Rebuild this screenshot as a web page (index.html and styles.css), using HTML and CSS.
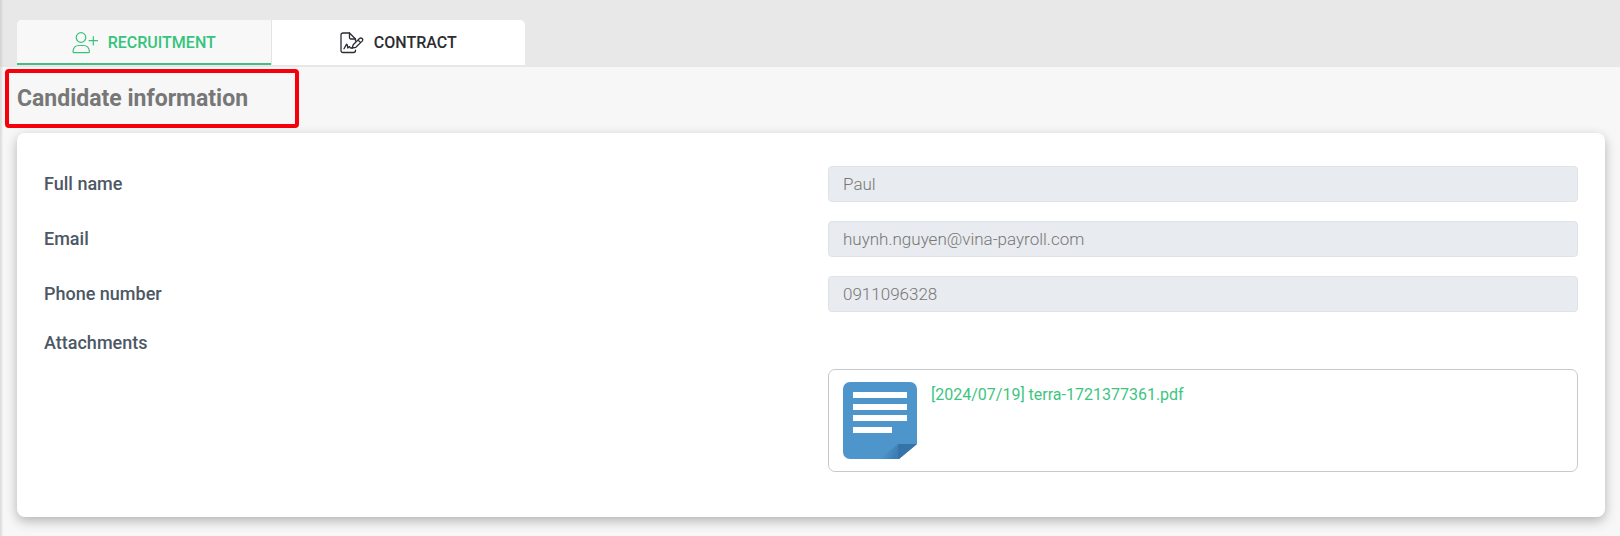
FILE: index.html
```
<!DOCTYPE html>
<html lang="en">
<head>
    <meta charset="UTF-8">
    <meta name="viewport" content="width=device-width, initial-scale=1.0">
    <title>Recruitment</title>
    <link rel="stylesheet" href="styles.css">
</head>
<body>

<header class="tab-bar">
    <nav class="tabs">
        <a href="#recruitment" class="tab active">
            <svg class="tab-icon" width="26" height="22" viewBox="0 0 26 22" fill="none" stroke="currentColor" stroke-width="1.2" stroke-linecap="round" stroke-linejoin="round">
                <circle cx="9" cy="5.5" r="4.8"/>
                <path d="M2.2 20.7h14c.8 0 1.3-.6 1.2-1.4-.4-3.6-3-5.8-6-5.8H7c-3 0-5.6 2.2-6 5.8-.1.8.4 1.4 1.2 1.4z"/>
                <path d="M21.3 4.5v8.4M17.1 8.7h8.4"/>
            </svg>
            RECRUITMENT
        </a>
        <a href="#contract" class="tab">
            <svg class="tab-icon" width="24" height="22" viewBox="0 0 24 22" fill="none" stroke="currentColor" stroke-width="1.3" stroke-linecap="round" stroke-linejoin="round">
                <path d="M15.5 18.2v.3c0 1.2-.8 2-2 2H3c-1.2 0-2-.8-2-2V3c0-1.2.8-2 2-2h6.5l6 6"/>
                <path d="M9.5 1v4.5c0 1 .5 1.5 1.5 1.5h4.5v2"/>
                <path d="M4 16.8l2.3-4.2c.3-.5.8-.4.9.2l.6 3.2L9 14.8c.4-.3.7-.1.9.3l.5.9h1.8"/>
                <path d="M12.2 16l1-3.2 6.3-6.3c1.7-1.5 4.3.8 2.7 2.6l-6.4 6.2zM18 8l2.6 2.6"/>
            </svg>
            CONTRACT
        </a>
    </nav>
</header>

<main>
    <h1 class="section-title">Candidate information</h1>

    <form class="card">
        <div class="form-row">
            <label for="full-name">Full name</label>
            <input type="text" id="full-name" value="Paul" readonly>
        </div>
        <div class="form-row">
            <label for="email">Email</label>
            <input type="text" id="email" value="huynh.nguyen@vina-payroll.com" readonly>
        </div>
        <div class="form-row">
            <label for="phone">Phone number</label>
            <input type="text" id="phone" value="0911096328" readonly>
        </div>
        <h2 class="attachments-title">Attachments</h2>
        <div class="form-row">
            <div class="attachment">
                <svg width="74" height="77" viewBox="0 0 74 77">
                    <defs>
                        <linearGradient id="fold-shade" x1="0" y1="0" x2="1" y2="0.4">
                            <stop offset="0.4" stop-color="#4e95cb"/>
                            <stop offset="1" stop-color="#3d7fb5"/>
                        </linearGradient>
                    </defs>
                    <path fill="#4e95cb" d="M7 0h60a7 7 0 0 1 7 7v55L56 77H7a7 7 0 0 1-7-7V7a7 7 0 0 1 7-7z"/>
                    <path fill="url(#fold-shade)" d="M55 62v15H36z"/>
                    <path fill="#3674a8" d="M55 62h19L56 77h-1z"/>
                    <path fill="#fff" d="M10 10h54v6H10zM10 22h54v6H10zM10 33h54v6H10zM10 45h39v6H10z"/>
                </svg>
                <a href="#terra-1721377361.pdf">[2024/07/19] terra-1721377361.pdf</a>
            </div>
        </div>
    </form>
</main>

</body>
</html>
```
FILE: styles.css
```
* {
    box-sizing: border-box;
}
body {
    font-family: Roboto, Arial, sans-serif;
    margin: 0;
    min-height: 100vh;
    background-color: #f7f7f7;
    color: #777;
    box-shadow: inset 3px 0 2px -1px #ddd;
}
.tab-bar {
    background-color: #e8e8e8;
    padding: 20px 17px 2px;
    box-shadow: inset 3px 0 2px -1px #d4d4d4;
}
.tabs {
    display: flex;
    width: 508px;
    max-width: 100%;
    border-radius: 5px 5px 0 0;
    background: #fff;
    overflow: hidden;
}
.tab {
    flex: 1;
    display: flex;
    align-items: center;
    justify-content: center;
    gap: 10px;
    height: 45px;
    color: #2b2d33;
    font-size: 16px;
    font-weight: 500;
    text-decoration: none;
}
.tab.active {
    background: #f8f8f8;
    color: #35c47c;
    border-right: 1px solid #e4e4e4;
    box-shadow: inset 0 -2px #46bd83;
}
.section-title {
    width: fit-content;
    margin: 2px 5px 5px;
    padding: 12px 47px 11px 8px;
    border: 4px solid #f6000c;
    border-radius: 4px;
    font-size: 23px;
    line-height: 28px;
    font-weight: 700;
}
.card {
    margin: 0 15px 16px 17px;
    padding: 33px 27px 45px;
    border-radius: 8px;
    background: #fff;
    box-shadow: 0 4px 12px rgba(0, 0, 0, 0.28);
}
.form-row {
    display: grid;
    grid-template-columns: 1fr 1fr;
    column-gap: 34px;
    align-items: center;
    margin-bottom: 19px;
}
.form-row:last-child {
    margin-bottom: 0;
}
label,
.attachments-title {
    color: #4d5765;
    font-size: 18px;
    line-height: 24px;
    font-weight: 500;
}
input {
    width: 100%;
    height: 36px;
    padding: 0 14px;
    border: 1px solid #dfe2e6;
    border-radius: 4px;
    background: #e8ebef;
    color: #777;
    font-family: inherit;
    font-size: 17px;
    font-weight: 300;
}
.attachments-title {
    margin: 0 0 14px;
}
.attachment {
    grid-column: 2;
    display: flex;
    gap: 14px;
    min-height: 103px;
    padding: 12px 14px;
    border: 1px solid #c9c9cd;
    border-radius: 7px;
}
.attachment a {
    color: #3ec481;
    font-size: 16px;
    line-height: 26px;
    text-decoration: none;
}
```
